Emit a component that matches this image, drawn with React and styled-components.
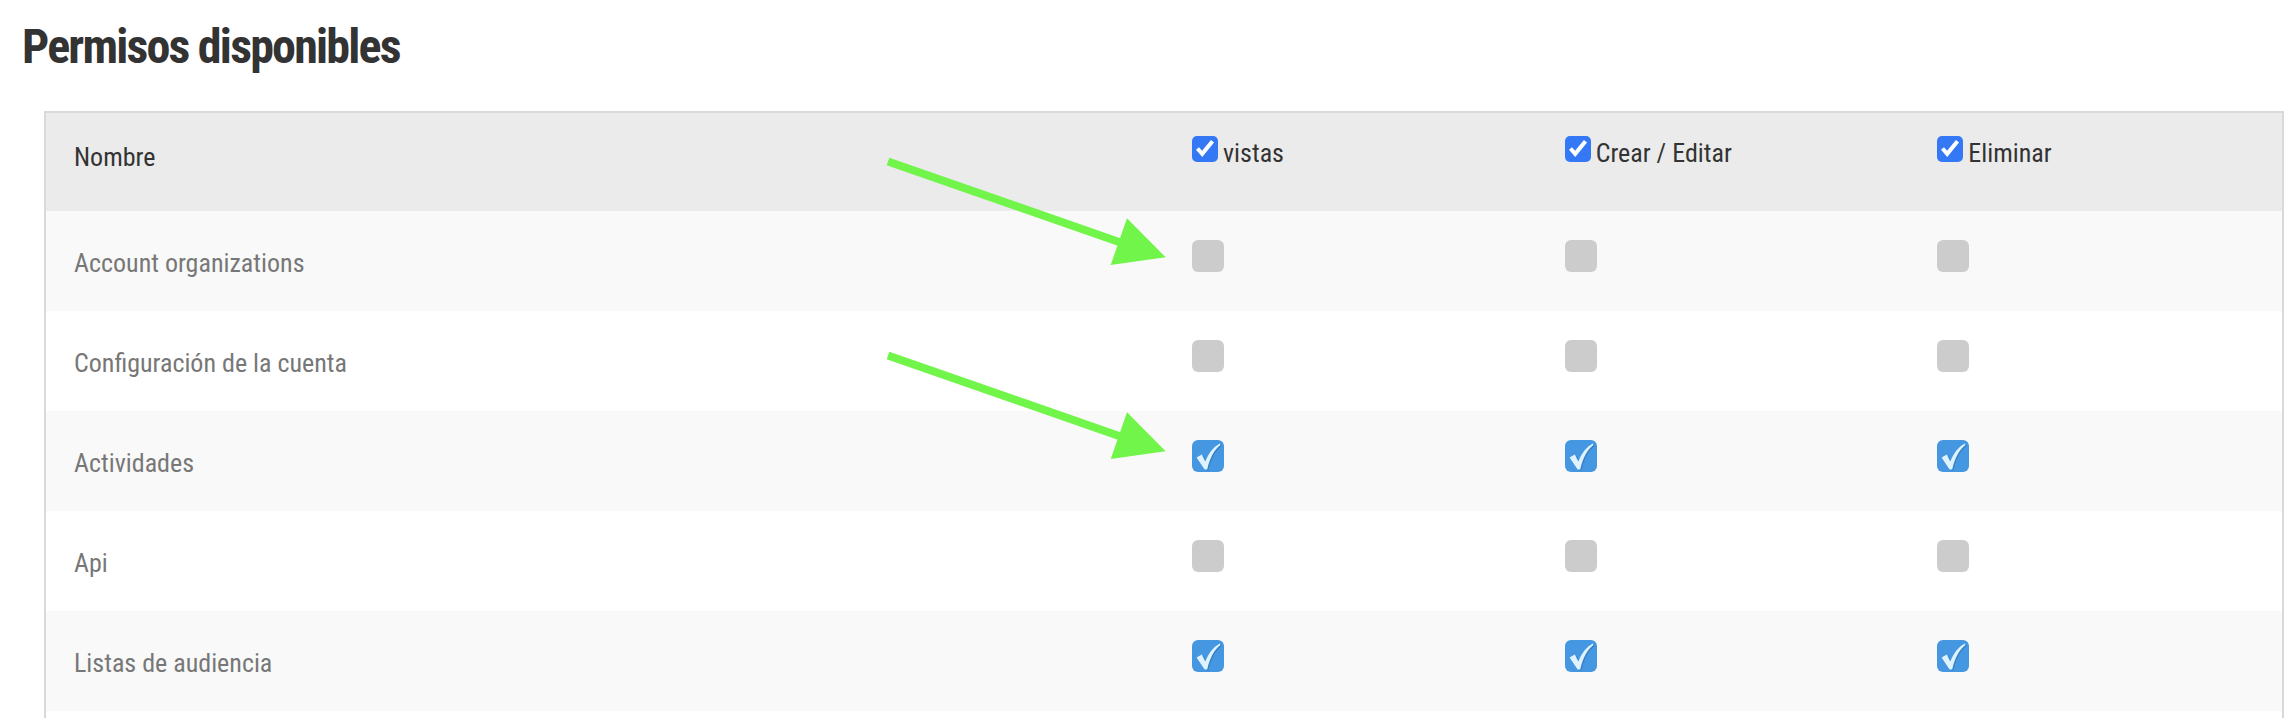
import styled, { createGlobalStyle } from "styled-components";

const GlobalStyle = createGlobalStyle`
  html, body {
    margin: 0;
    padding: 0;
    background: #ffffff;
  }
  body {
    font-family: "Roboto Condensed", "Roboto", "Liberation Sans Narrow", sans-serif;
  }
`;

const Page = styled.div`
  position: relative;
  box-sizing: border-box;
  width: 2296px;
  height: 718px;
  overflow: hidden;
  padding: 19px 12px 0 22px;
`;

const Title = styled.h2`
  margin: 0;
  font-size: 48px;
  line-height: 56px;
  font-weight: 700;
  letter-spacing: -1.8px;
  color: #333333;
`;

const PermTable = styled.table`
  box-sizing: border-box;
  width: calc(100% - 22px);
  margin: 36px 0 0 22px;
  border: 2px solid #d9d9d9;
  border-spacing: 0;
  table-layout: fixed;
`;

const HeadTr = styled.tr`
  height: 98px;
  background-color: #ebebeb;
`;

const BodyTr = styled.tr`
  height: 100px;
  background-color: ${(props) => (props.iscolored ? "#f9f9f9" : "#ffffff")};
`;

const HeadTh = styled.th`
  box-sizing: border-box;
  width: ${(props) => props.w};
  padding: ${(props) => props.top}px 0 0 28px;
  vertical-align: top;
  text-align: left;
  font-size: 26px;
  line-height: 26px;
  font-weight: 400;
  color: #333333;
`;

const NameTd = styled.td`
  padding: 39px 0 0 28px;
  vertical-align: top;
  font-size: 26px;
  line-height: 26px;
  color: #777777;
`;

const CheckTd = styled.td`
  padding: 29px 0 0 28px;
  vertical-align: top;
`;

const HeadLabel = styled.label`
  display: block;
  white-space: nowrap;
`;

const HeadBox = styled.span`
  display: inline-block;
  width: 26px;
  height: 26px;
  margin-right: 5px;
  overflow: hidden;
  vertical-align: baseline;
  svg {
    display: block;
  }
`;

const RowBox = styled.span`
  display: block;
  width: 32px;
  height: 32px;
  border-radius: 6px;
  overflow: hidden;
  background-color: ${(props) => (props.checked ? "#4597e1" : "#cccccc")};
  svg {
    display: block;
  }
`;

const Overlay = styled.svg`
  position: absolute;
  left: 0;
  top: 0;
  pointer-events: none;
`;

// the last row only lies below the visible edge, so the table keeps going
const rows = [
  { name: "Account organizations", checked: false },
  { name: "Configuración de la cuenta", checked: false },
  { name: "Actividades", checked: true },
  { name: "Api", checked: false },
  { name: "Listas de audiencia", checked: true },
  { name: "", checked: false },
];

const columns = ["vistas", "Crear / Editar", "Eliminar"];

function HeaderCheck() {
  return (
    <HeadBox>
      <svg width="26" height="26" viewBox="0 0 26 26">
        <rect x="0" y="0" width="26" height="26" rx="5" fill="#3478f6" />
        <path d="M5.5 12.5 L10.2 17.8 L20.5 5.2" fill="none" stroke="#ffffff" strokeWidth="4" />
      </svg>
    </HeadBox>
  );
}

function RowCheck({ checked }) {
  return (
    <RowBox checked={checked ? 1 : 0}>
      {checked && (
        <svg width="32" height="32" viewBox="0 0 32 32">
          <path
            d="M6 18.5 L11.2 15.6 L14.6 22.6 C18 14 22.8 8 29 4.6 L29.6 6 C23.4 10.6 19 19 16.4 30.4 L13.8 30.6 Z"
            fill="#2f6fae"
            opacity="0.55"
          />
          <path
            d="M4.6 17.4 L9.8 14.6 L13.3 21.6 C16.7 13 21.5 7 27.8 3.6 L28.4 5 C22.2 9.6 17.8 18 15.2 29.4 L12.6 29.6 Z"
            fill="#def3ff"
          />
        </svg>
      )}
    </RowBox>
  );
}

function Arrow({ dy }) {
  return (
    <g transform={`translate(0 ${dy})`}>
      <line x1="888" y1="161.5" x2="1122" y2="243" stroke="#72f54b" strokeWidth="8" />
      <polygon points="1165.7,257.3 1127,218.3 1110.7,265" fill="#72f54b" />
    </g>
  );
}

function App() {
  return (
    <>
      <GlobalStyle />
      <Page>
        <Title>{"Permisos disponibles"}</Title>
        <PermTable>
          <thead>
            <HeadTr>
              <HeadTh w="50%" top={31}>
                {"Nombre"}
              </HeadTh>
              {columns.map((col) => (
                <HeadTh key={col} w="16.6667%" top={23}>
                  <HeadLabel>
                    <HeaderCheck />
                    {col}
                  </HeadLabel>
                </HeadTh>
              ))}
            </HeadTr>
          </thead>
          <tbody>
            {rows.map((row, ix) => (
              <BodyTr key={ix} iscolored={ix % 2 === 0 ? 1 : 0}>
                <NameTd>{row.name}</NameTd>
                {columns.map((col) => (
                  <CheckTd key={col}>
                    <RowCheck checked={row.checked} />
                  </CheckTd>
                ))}
              </BodyTr>
            ))}
          </tbody>
        </PermTable>
        <Overlay width="2296" height="718" viewBox="0 0 2296 718">
          <Arrow dy={0} />
          <Arrow dy={194} />
        </Overlay>
      </Page>
    </>
  );
}

export default App;
